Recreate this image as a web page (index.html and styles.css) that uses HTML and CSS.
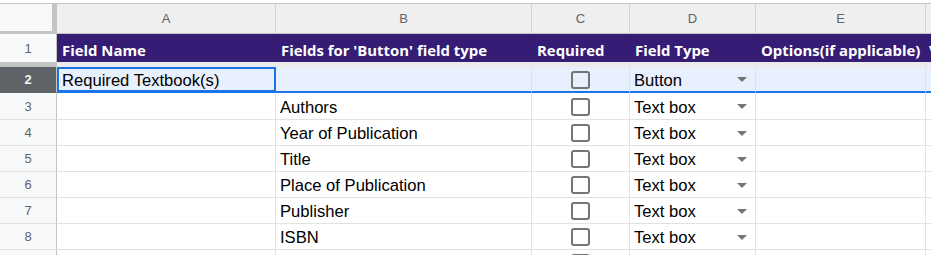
FILE: index.html
```html
<!DOCTYPE html>
<html>
<head>
<meta charset="utf-8">
<link rel="stylesheet" href="styles.css">
</head>
<body>
<div class="sheet">
  <div class="corner"></div>
  <div class="colhead">A</div>
  <div class="colhead">B</div>
  <div class="colhead">C</div>
  <div class="colhead">D</div>
  <div class="colhead">E</div>
  <div class="colhead last"></div>

  <div class="rowhead frozen">1</div>
  <div class="hcell">Field Name</div>
  <div class="hcell">Fields for 'Button' field type</div>
  <div class="hcell">Required</div>
  <div class="hcell">Field Type</div>
  <div class="hcell">Options(if applicable)</div>
  <div class="hcell tight">Validation</div>

  <div class="rowhead sel">2</div>
  <div class="cell selrow active">Required Textbook(s)</div>
  <div class="cell selrow"></div>
  <div class="cell selrow check"><span class="box"></span></div>
  <div class="cell selrow drop">Button<span class="arrow"></span></div>
  <div class="cell selrow"></div>
  <div class="cell selrow"></div>

  <div class="rowhead r3">3</div>
  <div class="cell r3"></div>
  <div class="cell r3">Authors</div>
  <div class="cell r3 check"><span class="box"></span></div>
  <div class="cell r3 drop">Text box<span class="arrow"></span></div>
  <div class="cell r3"></div>
  <div class="cell r3"></div>

  <div class="rowhead">4</div>
  <div class="cell"></div>
  <div class="cell">Year of Publication</div>
  <div class="cell check"><span class="box"></span></div>
  <div class="cell drop">Text box<span class="arrow"></span></div>
  <div class="cell"></div>
  <div class="cell"></div>

  <div class="rowhead">5</div>
  <div class="cell"></div>
  <div class="cell">Title</div>
  <div class="cell check"><span class="box"></span></div>
  <div class="cell drop">Text box<span class="arrow"></span></div>
  <div class="cell"></div>
  <div class="cell"></div>

  <div class="rowhead">6</div>
  <div class="cell"></div>
  <div class="cell">Place of Publication</div>
  <div class="cell check"><span class="box"></span></div>
  <div class="cell drop">Text box<span class="arrow"></span></div>
  <div class="cell"></div>
  <div class="cell"></div>

  <div class="rowhead">7</div>
  <div class="cell"></div>
  <div class="cell">Publisher</div>
  <div class="cell check"><span class="box"></span></div>
  <div class="cell drop">Text box<span class="arrow"></span></div>
  <div class="cell"></div>
  <div class="cell"></div>

  <div class="rowhead">8</div>
  <div class="cell"></div>
  <div class="cell">ISBN</div>
  <div class="cell check"><span class="box"></span></div>
  <div class="cell drop">Text box<span class="arrow"></span></div>
  <div class="cell"></div>
  <div class="cell"></div>

  <div class="rowhead"></div>
  <div class="cell"></div>
  <div class="cell"></div>
  <div class="cell check"><span class="box"></span></div>
  <div class="cell"></div>
  <div class="cell"></div>
  <div class="cell"></div>
</div>
</body>
</html>
```
FILE: styles.css
```css
* { box-sizing: border-box; }
html, body { margin: 0; padding: 0; background: #ffffff; overflow: hidden; }
body { padding-top: 3px; }
.sheet {
  display: grid;
  grid-template-columns: 57px 219px 256px 98px 126px 170px 1fr;
  grid-auto-rows: 26px;
  grid-template-rows: 30px 33px 26px 27px;
  border-top: 1px solid #c7c7c7;
  font-family: "Liberation Sans", Arial, sans-serif;
  font-size: 16.6px;
  color: #000000;
  width: 1000px;
}
.corner {
  background: #f8f9fa;
  border-right: 5px solid #c4c4c4;
  border-bottom: 3px solid #c4c4c4;
}
.colhead {
  background: #efefef;
  border-right: 1px solid #d3d3d3;
  border-bottom: 1px solid #c4c4c4;
  color: #5f6368;
  font-size: 13px;
  display: flex;
  align-items: center;
  justify-content: center;
}
.rowhead {
  background: #f8f9fa;
  border-right: 1px solid #c4c4c4;
  border-bottom: 1px solid #e0e0e0;
  color: #5f6368;
  font-size: 13px;
  display: flex;
  align-items: center;
  justify-content: center;
}
.rowhead.frozen {
  border-bottom: 5px solid #c4c4c4;
}
.rowhead.sel {
  background: #5f6368;
  color: #f1f3f4;
  font-weight: bold;
  border-bottom: 1px solid #5f6368;
}
.hcell {
  background: #351c75;
  color: #ffffff;
  font-family: "Open Sans", "Noto Sans", sans-serif;
  font-weight: bold;
  font-size: 14.9px;
  padding-left: 5px;
  display: flex;
  align-items: center;
  white-space: nowrap;
  overflow: hidden;
  border-bottom: 5px solid #ebebeb;
  padding-top: 3px;
}
.hcell.tight { padding-left: 3px; }
.cell {
  border-right: 1px solid #e2e2e2;
  border-bottom: 1px solid #e2e2e2;
  padding-left: 4px;
  padding-top: 3px;
  display: flex;
  align-items: center;
  white-space: nowrap;
  overflow: hidden;
}
.cell.selrow {
  background: #e8f0fe;
  border-bottom: 2px solid #1a73e8;
}
.cell.active {
  position: relative;
  overflow: visible;
  padding-left: 5px;
}
.cell.active::after {
  content: "";
  position: absolute;
  left: 0;
  top: 0;
  right: -1px;
  bottom: -1px;
  border: 2px solid #1a73e8;
}
.cell.check {
  justify-content: center;
  padding-left: 0;
  padding-top: 1px;
}
.box {
  width: 19px;
  height: 18px;
  border: 2px solid #757575;
  border-radius: 3px;
}
.cell.drop {
  justify-content: space-between;
  padding-right: 8px;
}
.arrow {
  width: 0;
  height: 0;
  margin-bottom: 2px;
  border-left: 5px solid transparent;
  border-right: 5px solid transparent;
  border-top: 5px solid #757575;
}
```
